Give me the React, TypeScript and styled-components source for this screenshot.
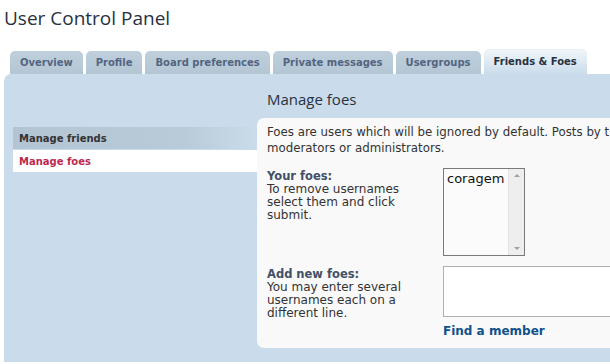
import React from 'react';
import styled, {createGlobalStyle} from 'styled-components';

const GlobalStyle = createGlobalStyle`
    html, body {
        margin: 0;
        padding: 0;
        background: #ffffff;
    }
    body {
        font-family: "DejaVu Sans", Verdana, sans-serif;
        overflow: hidden;
    }
`;

const Page = styled.div`
    width: 610px;
    height: 364px;
    overflow: hidden;
    padding: 0 0 0 4px;
    box-sizing: border-box;
`;

const Title = styled.h1`
    margin: 0;
    padding: 5px 0 0 0;
    height: 45px;
    box-sizing: border-box;
    font-family: "Open Sans", "DejaVu Sans", sans-serif;
    font-weight: normal;
    font-size: 19px;
    color: #28313f;
`;

const TabBar = styled.ul`
    display: flex;
    align-items: flex-end;
    gap: 3px;
    list-style: none;
    margin: 0;
    padding: 0 0 0 6px;
    height: 29px;
`;

const Tab = styled.li<{$active?: boolean}>`
    height: ${({$active}) => ($active ? '25px' : '23px')};
    padding: 0 10px;
    display: flex;
    align-items: center;
    box-sizing: border-box;
    border-radius: 5px 5px 0 0;
    background: ${({$active}) =>
        $active ? 'linear-gradient(#f2f6fa, #cadceb)' : 'linear-gradient(#bfcfdc, #b4c6d4)'};
    box-shadow: ${({$active}) => ($active ? 'inset 0 1px 0 #e8eff5' : 'none')};
    font-size: 10px;
    font-weight: bold;
    color: ${({$active}) => ($active ? '#28313f' : '#536482')};
    white-space: nowrap;
`;

const Panel = styled.div`
    display: flex;
    width: 680px;
    height: 288px;
    background: #cadceb;
    border-radius: 7px 0 0 0;
`;

const Menu = styled.ul`
    list-style: none;
    margin: 0;
    padding: 53px 0 0 9px;
    width: 244px;
    flex-shrink: 0;
`;

const MenuItem = styled.li<{$current?: boolean}>`
    height: 22px;
    padding-left: 6px;
    display: flex;
    align-items: center;
    font-size: 10px;
    font-weight: bold;
    white-space: nowrap;
    color: ${({$current}) => ($current ? '#bc2a4d' : '#333333')};
    background: ${({$current}) =>
        $current ? '#ffffff' : 'linear-gradient(to right, #b3c4d2 0%, #b9cad8 70%, #cadceb 100%)'};
    margin-bottom: 1px;
`;

const Main = styled.div`
    flex: 1;
    display: flex;
    flex-direction: column;
`;

const Heading = styled.h2`
    margin: 0;
    height: 44px;
    padding: 15px 0 0 10px;
    box-sizing: border-box;
    font-family: "Open Sans", "DejaVu Sans", sans-serif;
    font-weight: normal;
    font-size: 15px;
    color: #28313f;
`;

const Content = styled.div`
    background: #f9f9f9;
    border-radius: 7px 0 0 7px;
    height: 230px;
    padding: 6px 10px;
    box-sizing: border-box;
    color: #333333;
    font-size: 12px;
    line-height: 13px;
`;

const Intro = styled.p`
    margin: 0 0 12px 0;
    font-size: 11.8px;
    line-height: 16px;
    white-space: nowrap;
`;

const Field = styled.dl`
    display: flex;
    margin: 0 0 10px 0;
`;

const Label = styled.dt`
    width: 176px;
    flex-shrink: 0;
    padding: 1px 16px 0 0;
    box-sizing: border-box;
`;

const LabelTitle = styled.span`
    display: block;
    font-weight: bold;
    color: #425067;
    font-size: 11.5px;
    line-height: 14px;
`;

const Value = styled.dd`
    margin: 0;
    flex: 1;
`;

const ListBox = styled.div`
    display: flex;
    width: 82px;
    height: 88px;
    box-sizing: border-box;
    border: 1px solid #7a7a7a;
    background: #fbfbfb;
`;

const ListItems = styled.div`
    flex: 1;
    padding: 2px 3px;
    font-size: 13px;
    line-height: 16px;
    color: #111111;
`;

const ScrollTrack = styled.div`
    width: 16px;
    background: #eeeeee;
    border-left: 1px solid #e2e2e2;
    display: flex;
    flex-direction: column;
    justify-content: space-between;
    align-items: center;
    padding: 5px 0;
    box-sizing: border-box;
`;

const Arrow = styled.span<{$down?: boolean}>`
    width: 0;
    height: 0;
    border-left: 3px solid transparent;
    border-right: 3px solid transparent;
    ${({$down}) => ($down ? 'border-top: 3px solid #a0a0a0;' : 'border-bottom: 3px solid #a0a0a0;')}
`;

const TextArea = styled.textarea`
    display: block;
    width: 200px;
    height: 51px;
    box-sizing: border-box;
    border: 1px solid #b0b0b0;
    background: #ffffff;
    resize: none;
    margin: 0;
    padding: 2px;
`;

const FindLink = styled.a`
    display: inline-block;
    margin-top: 7px;
    font-size: 12px;
    line-height: 14px;
    font-weight: bold;
    color: #105289;
    text-decoration: none;
`;

const tabs = ['Overview', 'Profile', 'Board preferences', 'Private messages', 'Usergroups', 'Friends & Foes'];

export default function App() {
    return (
        <Page>
            <GlobalStyle />
            <Title>User Control Panel</Title>
            <TabBar>
                {tabs.map(t => (
                    <Tab key={t} $active={t === 'Friends & Foes'}>{t}</Tab>
                ))}
            </TabBar>
            <Panel>
                <Menu>
                    <MenuItem>Manage friends</MenuItem>
                    <MenuItem $current>Manage foes</MenuItem>
                </Menu>
                <Main>
                    <Heading>Manage foes</Heading>
                    <Content>
                        <Intro>
                            Foes are users which will be ignored by default. Posts by these users will not be fully visible.<br />
                            moderators or administrators.
                        </Intro>
                        <Field>
                            <Label>
                                <LabelTitle>Your foes:</LabelTitle>
                                To remove usernames select them and click submit.
                            </Label>
                            <Value>
                                <ListBox>
                                    <ListItems>coragem</ListItems>
                                    <ScrollTrack>
                                        <Arrow />
                                        <Arrow $down />
                                    </ScrollTrack>
                                </ListBox>
                            </Value>
                        </Field>
                        <Field>
                            <Label>
                                <LabelTitle>Add new foes:</LabelTitle>
                                You may enter several usernames each on a different line.
                            </Label>
                            <Value>
                                <TextArea />
                                <FindLink href="#">Find a member</FindLink>
                            </Value>
                        </Field>
                    </Content>
                </Main>
            </Panel>
        </Page>
    );
}
